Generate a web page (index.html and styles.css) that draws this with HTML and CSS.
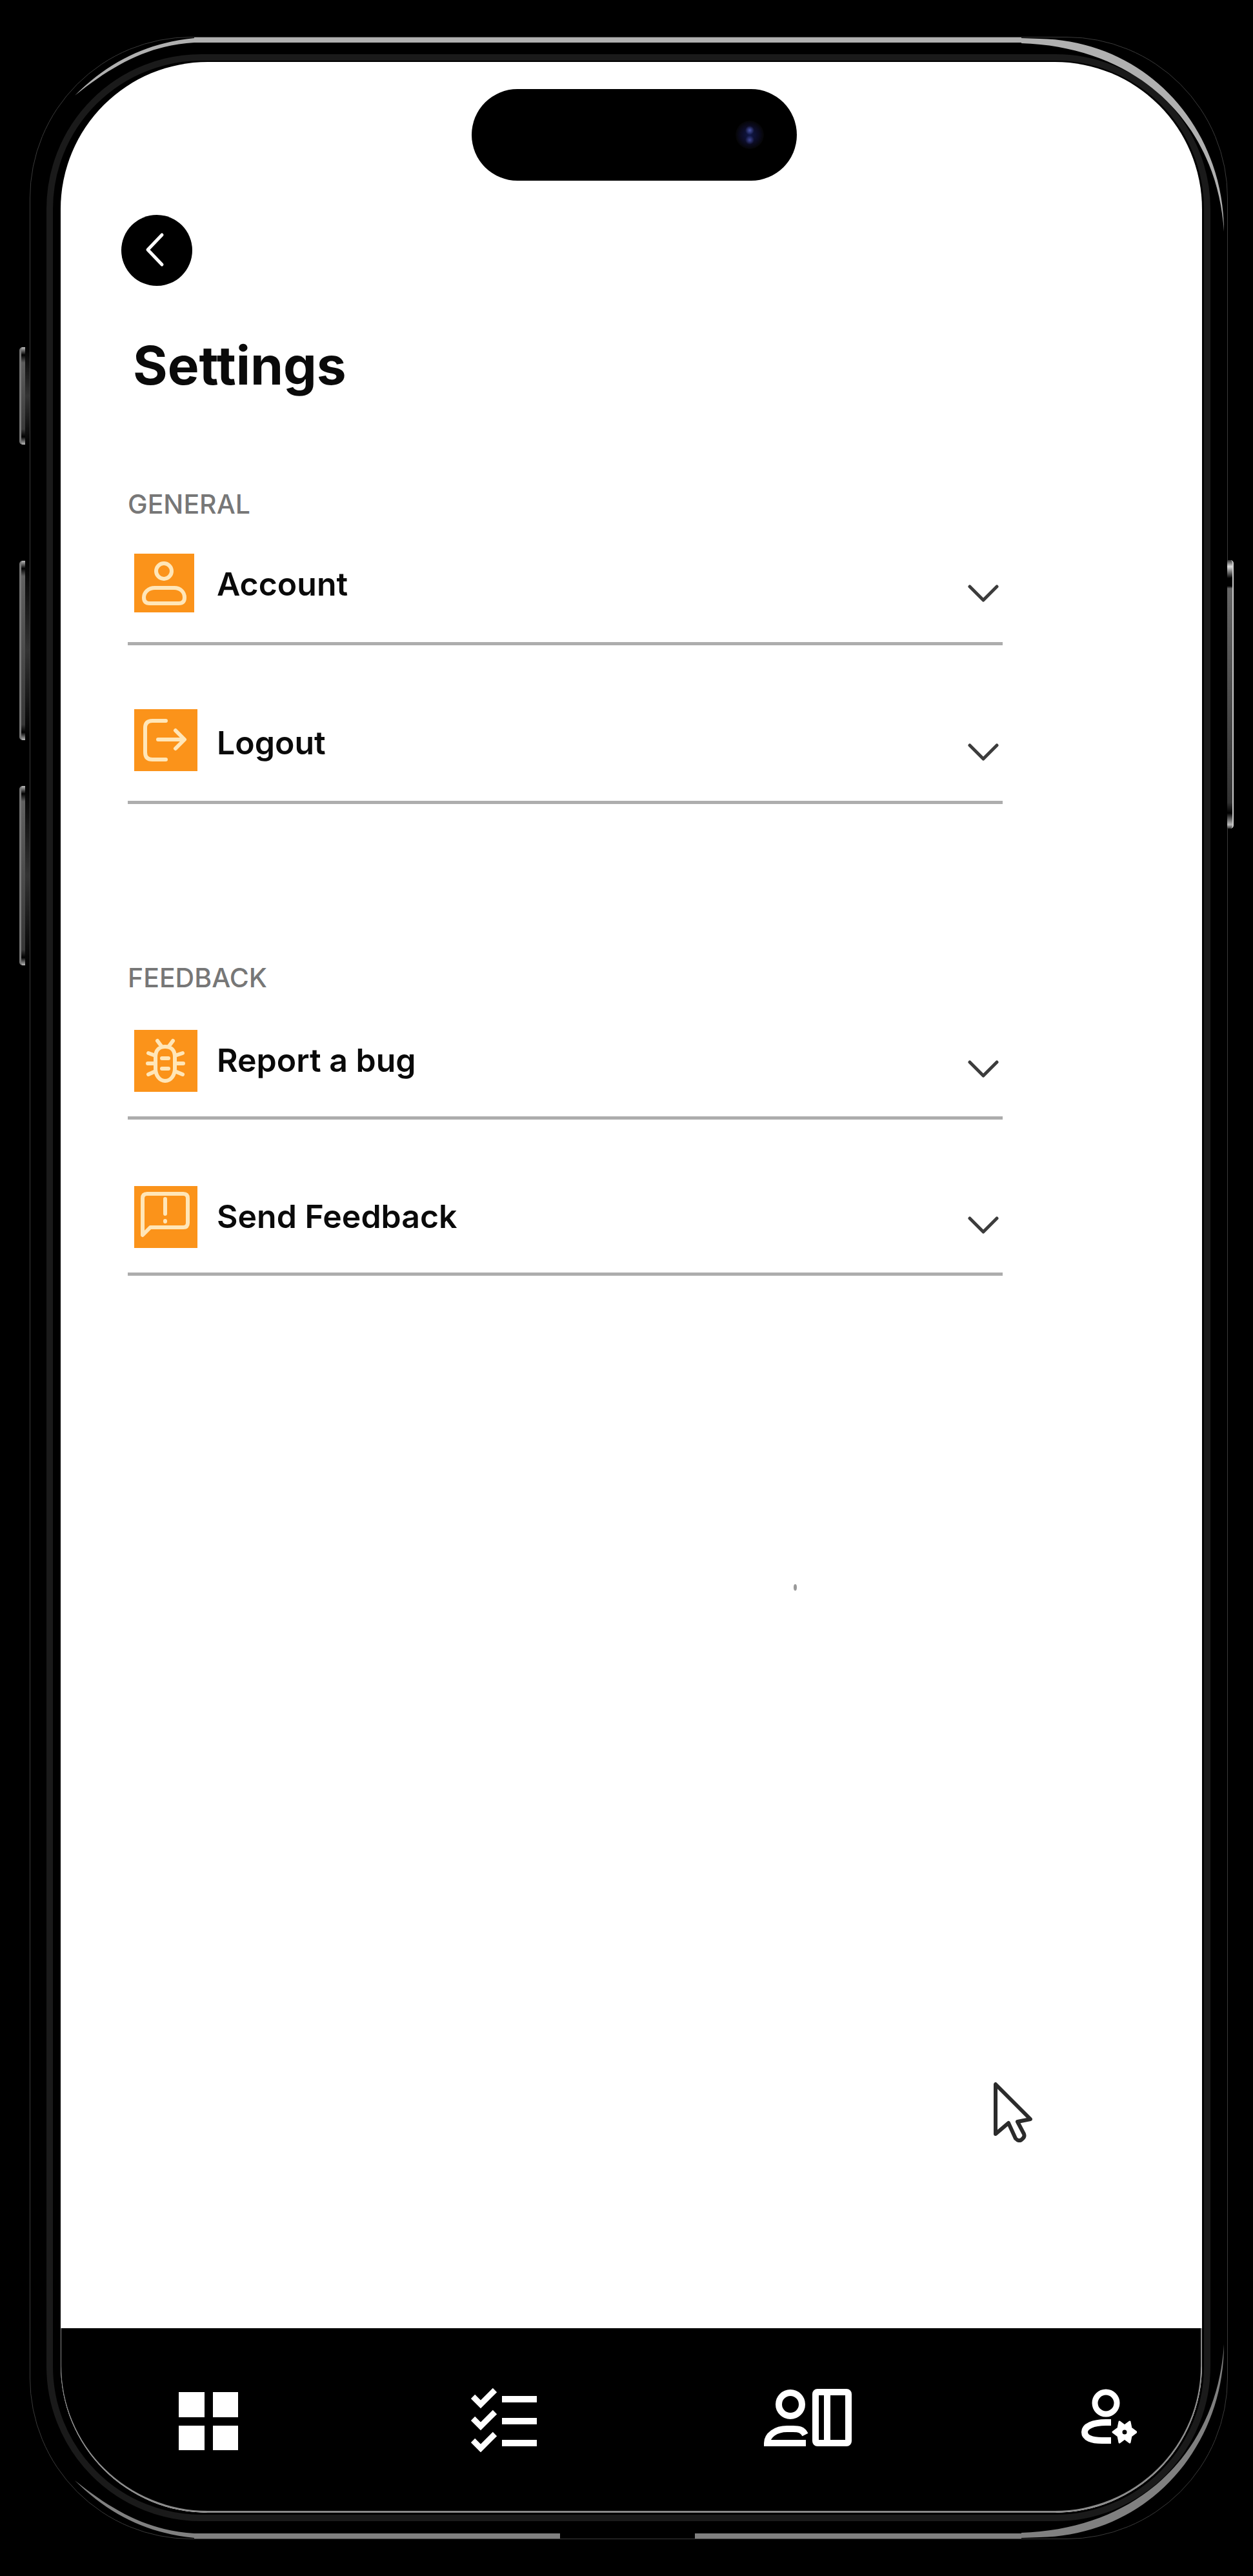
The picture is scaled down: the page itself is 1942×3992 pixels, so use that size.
FILE: index.html
```html
<!DOCTYPE html>
<html lang="en">
<head>
<meta charset="utf-8">
<meta name="viewport" content="width=device-width, initial-scale=1">
<title>Settings</title>
<link rel="stylesheet" href="styles.css">
</head>
<body>
<div class="device">
  <span class="key key-action"></span>
  <span class="key key-up"></span>
  <span class="key key-down"></span>
  <span class="key key-power"></span>
  <span class="rim rim-top"></span>
  <span class="rim rim-bottom-start"></span>
  <span class="rim rim-bottom-end"></span>
  <svg class="shine shine-left shine-top" viewBox="0 0 185 90" aria-hidden="true"><path d="M185 1C115 8 55 35 0 90C60 42 115 12 185 8Z"/></svg>
  <svg class="shine shine-left shine-bottom" viewBox="0 0 185 90" aria-hidden="true"><path d="M185 1C115 8 55 35 0 90C60 42 115 12 185 8Z"/></svg>
  <svg class="shine shine-right shine-top" viewBox="0 0 320 302" aria-hidden="true"><path d="M0 1L28 2C195 5 314 140 314 301C304 140 188 15 0 9Z"/></svg>
  <svg class="shine shine-right shine-bottom" viewBox="0 0 320 302" aria-hidden="true"><path d="M0 1L28 2C195 5 314 140 314 301C304 140 188 15 0 9Z"/></svg>

  <div class="bezel">
    <div class="screen">
      <main class="content">
        <div class="island"><span class="camera"></span></div>
        <button class="back" type="button" aria-label="Back">
          <svg viewBox="0 0 110 110" aria-hidden="true"><path d="M63 31L41 54L63 77"/></svg>
        </button>
        <h1 class="title">Settings</h1>

        <section class="group group-general">
          <h2 class="group-label">GENERAL</h2>
          <button class="row" type="button">
            <svg class="tile tile-small" viewBox="0 0 93 91" aria-hidden="true"><circle cx="46" cy="27" r="12"/><path d="M32 53H62C72 53 78 60 78 68Q78 77 69 77H24Q15 77 15 68C15 60 22 53 32 53Z"/></svg>
            <span class="row-text">Account</span>
            <svg class="chevron" viewBox="0 0 48 27" aria-hidden="true"><path d="M3 3L24 24L45 3"/></svg>
          </button>
          <button class="row" type="button">
            <svg class="tile" viewBox="0 0 98 96" aria-hidden="true"><path d="M49 18H28Q17 18 17 29V67Q17 78 28 78H49M37 47H77M64 33L78 47L64 61"/></svg>
            <span class="row-text">Logout</span>
            <svg class="chevron" viewBox="0 0 48 27" aria-hidden="true"><path d="M3 3L24 24L45 3"/></svg>
          </button>
        </section>

        <section class="group group-feedback">
          <h2 class="group-label">FEEDBACK</h2>
          <button class="row" type="button">
            <svg class="tile" viewBox="0 0 98 96" aria-hidden="true"><path d="M36 17L42 25M60 17L54 25M33 42C33 31 39 26 48 26C57 26 63 31 63 42V60C63 70 57 79 48 79C39 79 33 70 33 60ZM33 40L22 36M33 52H21M33 64L22 69M63 40L75 36M63 52H76M63 64L75 69M43 44H53M43 60H53"/></svg>
            <span class="row-text">Report a bug</span>
            <svg class="chevron" viewBox="0 0 48 27" aria-hidden="true"><path d="M3 3L24 24L45 3"/></svg>
          </button>
          <button class="row" type="button">
            <svg class="tile" viewBox="0 0 98 96" aria-hidden="true"><path d="M13 76V19Q13 12 20 12H76Q83 12 83 19V57Q83 64 76 64H25ZM48 20V43M48 54V55"/></svg>
            <span class="row-text">Send Feedback</span>
            <svg class="chevron" viewBox="0 0 48 27" aria-hidden="true"><path d="M3 3L24 24L45 3"/></svg>
          </button>
        </section>

        <span class="speck"></span>
        <svg class="pointer" viewBox="0 0 62 94" aria-hidden="true"><path d="M4 4V81L24 64L35 88Q40 93 44 90Q50 86 48 81L38 62L58 58Z"/></svg>
      </main>

      <nav class="tabs" aria-label="Main">
        <a href="#dashboard" aria-label="Dashboard">
          <svg width="101" height="100" viewBox="0 0 101 100" aria-hidden="true"><path class="solid" d="M0 7H40V46H0ZM53 7H92V46H53ZM0 59H40V97H0ZM53 59H92V97H53Z"/></svg>
        </a>
        <a href="#tasks" aria-label="Tasks">
          <svg width="102" height="100" viewBox="0 0 102 100" aria-hidden="true"><path class="line-mid" d="M3 14L15 26L37 4M3 48L15 60L37 38M3 82L15 94L37 72"/><path class="solid" d="M48 13H102V23H48ZM48 47H102V57H48ZM48 81H102V91H48Z"/></svg>
        </a>
        <a href="#directory" aria-label="Directory">
          <svg width="136" height="100" viewBox="0 0 136 100" aria-hidden="true"><circle class="line" cx="41" cy="26" r="18"/><path class="line" d="M64 73C60 65 54 64 45 64H36C18 64 5 74 5 86H65"/><rect class="line" x="80" y="7" width="51" height="79" rx="3"/><path class="line" d="M98 7V86"/></svg>
        </a>
        <a href="#profile" aria-label="Profile settings">
          <svg width="90" height="100" viewBox="0 0 90 100" aria-hidden="true"><circle class="line-mid" cx="42" cy="24" r="17"/><path class="line" d="M50 54H42C22 54 9 60 9 69C9 78 20 82 36 82H50"/><path class="star" fill-rule="evenodd" d="M63 53L71 59L79 53L81 63L89 69L81 75L79 85L71 79L63 85L61 75L53 69L61 63ZM71 64A5 5 0 1 0 71 74A5 5 0 1 0 71 64Z"/></svg>
        </a>
      </nav>
    </div>
  </div>
</div>
</body>
</html>
```
FILE: styles.css
```css
* { box-sizing: border-box; }

body {
  margin: 0;
  min-height: 100vh;
  padding: 57px 39px 57px 46px;
  display: flex;
  background: #000;
  color: #0a0a0a;
  font-family: Inter, "Liberation Sans", sans-serif;
}

button {
  margin: 0;
  border: 0;
  background: none;
  color: inherit;
  font: inherit;
  text-align: left;
  cursor: pointer;
}

svg {
  display: block;
  flex: none;
  fill: none;
  stroke-linecap: round;
  stroke-linejoin: round;
}

/* Phone body */
.device {
  position: relative;
  flex: 1;
  display: flex;
  padding: 26px 26px 27px 25px;
  border: 1px solid #3a3a3a;
  border-radius: 250px;
}

.bezel {
  flex: 1;
  display: flex;
  padding: 2px 3px 3px 12px;
  border: 10px solid #1a1a1a;
  border-radius: 240px;
}

.screen {
  flex: 1;
  display: flex;
  flex-direction: column;
  overflow: hidden;
  border-radius: 228px;
  background: #fff;
}

/* Side keys */
.key {
  position: absolute;
  left: -17px;
  width: 16px;
  border-left: 3px solid #777;
  border-radius: 5px 0 0 5px;
  background:
    linear-gradient(#bbb 0, #000 12px, transparent 24px calc(100% - 24px), #000 calc(100% - 12px), #bbb 100%) 0 0 / 6px 100% no-repeat,
    linear-gradient(#666, #333) 0 0 / 6px 100% no-repeat,
    linear-gradient(#000, #333, #000);
}
.key-action { top: 480px; height: 151px; }
.key-up { top: 811px; height: 278px; }
.key-down { top: 1160px; height: 278px; }
.key-power {
  left: auto;
  right: -10px;
  top: 810px;
  width: 10px;
  height: 416px;
  border-left: 0;
  border-right: 2px solid #ccc;
  border-radius: 0 5px 5px 0;
  background: linear-gradient(#333 0, #ddd 10px, #000 28px, #000 40px, #666 44px, #333 calc(100% - 40px), #000 calc(100% - 24px), #bbb calc(100% - 6px), #333 100%);
}

/* Metal reflections along the rim */
.rim {
  position: absolute;
  height: 8px;
  background: #808080;
}
.rim-top { top: 0; left: 254px; right: 319px; background: #b0b0b0; }
.rim-bottom-start { bottom: 0; left: 254px; width: 567px; }
.rim-bottom-end { bottom: 0; left: 1030px; right: 319px; }
.shine { position: absolute; fill: #b0b0b0; }
.shine-left { left: 69px; width: 185px; }
.shine-right { right: -1px; width: 320px; }
.shine-top { top: 0; }
.shine-bottom { bottom: 0; transform: scaleY(-1); fill: #808080; }

/* Screen content */
.content {
  position: relative;
  flex: 1;
  padding: 42px 309px 160px 104px;
}

.island {
  width: 504px;
  height: 142px;
  margin-left: 533px;
  padding: 49px 51px;
  display: flex;
  justify-content: flex-end;
  border-radius: 71px;
  background: #000;
}
.camera {
  width: 44px;
  height: 44px;
  border-radius: 50%;
  background:
    radial-gradient(circle at 50% 34%, #4a55a8 0, transparent 7px),
    radial-gradient(circle at 50% 68%, #3f4694 0, transparent 7px),
    radial-gradient(circle, #10184a 0, #0b0b22 14px, #050505 22px);
}

.back {
  display: block;
  margin: 53px 0 0 -10px;
  padding: 0;
  width: 110px;
  height: 110px;
  border-radius: 50%;
  background: #000;
}
.back svg { stroke: #fff; stroke-width: 5px; }

.title {
  margin: 76px 0 142px 8px;
  font-size: 82px;
  line-height: 96px;
  font-weight: 700;
}

.group { display: flex; flex-direction: column; }
.group-general { gap: 99px; }
.group-feedback { gap: 103px; margin-top: 245px; }

.group-label {
  margin: 0 0 -46px;
  font-size: 41px;
  line-height: 48px;
  font-weight: 500;
  color: #777;
}

.row {
  display: flex;
  align-items: flex-end;
  padding: 0 6px 46px 10px;
  border-bottom: 5px solid #adadad;
  font-size: 50px;
  line-height: 60px;
  font-weight: 600;
}
.row-text { flex: 1; margin: 0 0 14px 30px; }
.group-feedback .row { padding-bottom: 38px; }
.group-feedback .row-text { margin-bottom: 19px; }

.tile {
  width: 98px;
  height: 96px;
  background: #fb931a;
  stroke: #ffe6b8;
  stroke-width: 6px;
}
.tile-small { width: 93px; height: 91px; margin-right: 5px; }

.chevron {
  width: 48px;
  height: 27px;
  margin-bottom: 16px;
  stroke: #3c3c3c;
  stroke-width: 5px;
}
.group-feedback .chevron { margin-bottom: 22px; }

/* Loose items lying over the empty area */
.speck {
  position: absolute;
  left: 1136px;
  top: 2359px;
  width: 5px;
  height: 10px;
  border-radius: 50%;
  background: #999;
}
.pointer {
  position: absolute;
  right: 262px;
  bottom: 288px;
  width: 62px;
  height: 94px;
  fill: #fff;
  stroke: #2b2b2b;
  stroke-width: 6px;
}

/* Tab bar */
.tabs {
  display: flex;
  justify-content: space-between;
  padding: 92px 99px 91px 182px;
  border: solid #8a8a8a;
  border-width: 0 2px 3px 1px;
  border-radius: 0 0 228px 228px;
  background: #000;
}
.tabs a { display: block; }
.tabs svg { stroke-linecap: butt; stroke-linejoin: miter; }
.solid { fill: #fff; }
.line { stroke: #fff; stroke-width: 10px; }
.line-mid { stroke: #fff; stroke-width: 9px; }
.star { fill: #fff; stroke: #fff; stroke-width: 3px; stroke-linejoin: round; }
```
